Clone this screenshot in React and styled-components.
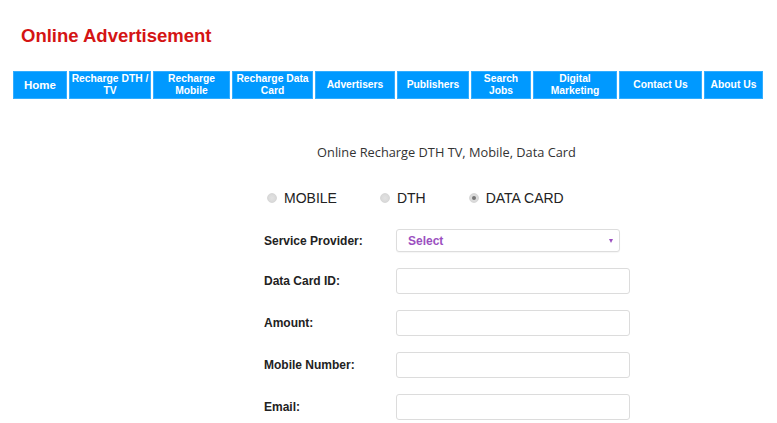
import React, { useState } from "react";
import styled, { createGlobalStyle } from "styled-components";

const GlobalStyle = createGlobalStyle`
  body {
    margin: 0;
    background: #fff;
    font-family: "Liberation Sans", Arial, sans-serif;
  }
`;

const Page = styled.div`
  width: 777px;
  padding-top: 25px;
`;

const Title = styled.h1`
  margin: 0 0 0 21px;
  font-size: 18.5px;
  line-height: 21px;
  font-weight: bold;
  color: #d41414;
`;

const Nav = styled.nav`
  display: flex;
  gap: 2px;
  margin: 25px 0 0 13px;
  height: 28px;
`;

const NavItem = styled.a`
  display: flex;
  align-items: center;
  justify-content: center;
  box-sizing: border-box;
  width: ${(p) => p.$w}px;
  padding: 0 ${(p) => p.$pad || 1}px;
  background: #0099ff;
  color: #fff;
  font-weight: bold;
  font-size: ${(p) => (p.$big ? 11.5 : 10.3)}px;
  line-height: 12px;
  text-align: center;
  text-decoration: none;
  box-shadow: inset 0 0 0 1px #33adff;
`;

const Main = styled.div`
  margin-left: 263px;
  width: 367px;
`;

const Subtitle = styled.p`
  margin: 44px 0 0;
  font-family: "Open Sans", sans-serif;
  font-size: 12.8px;
  line-height: 18px;
  color: #333;
  text-align: center;
`;

const RadioRow = styled.div`
  display: flex;
  gap: 43px;
  margin: 27px 0 0 4px;
  height: 20px;
`;

const RadioLabel = styled.label`
  display: flex;
  align-items: center;
  gap: 7px;
  font-size: 14px;
  color: #222;
`;

const Radio = styled.input`
  appearance: none;
  margin: 0;
  width: 10px;
  height: 10px;
  border-radius: 50%;
  background: radial-gradient(circle, #e2e2e2 0%, #d6d6d6 100%);
  border: 1px solid #d8d8d8;
  box-sizing: border-box;
  display: grid;
  place-items: center;

  &:checked::after {
    content: "";
    width: 4px;
    height: 4px;
    border-radius: 50%;
    background: #777;
  }
`;

const Form = styled.form`
  display: flex;
  flex-direction: column;
  gap: 16px;
  margin-top: 21px;
`;

const Row = styled.div`
  display: flex;
  align-items: center;
`;

const FieldLabel = styled.label`
  width: 132px;
  margin-left: 1px;
  font-size: 12px;
  font-weight: bold;
  color: #222;
`;

const SelectWrap = styled.div`
  position: relative;
  width: 224px;
  height: 23px;
`;

const Select = styled.select`
  appearance: none;
  width: 100%;
  height: 100%;
  box-sizing: border-box;
  border: 1px solid #ddd;
  border-radius: 3px;
  background: #fff;
  padding: 0 0 0 11px;
  font-family: "Liberation Sans", Arial, sans-serif;
  font-size: 12px;
  font-weight: bold;
  color: #9b4fc0;
  box-shadow: 0 1px 1px rgba(0, 0, 0, 0.04);
`;

const Arrow = styled.span`
  position: absolute;
  right: 7px;
  top: 10px;
  width: 0;
  height: 0;
  border-left: 2.5px solid transparent;
  border-right: 2.5px solid transparent;
  border-top: 4px solid #9b4fc0;
  pointer-events: none;
`;

const Input = styled.input`
  width: 234px;
  height: 26px;
  box-sizing: border-box;
  border: 1px solid #dcdcdc;
  border-radius: 3px;
  padding: 0 8px;
  background: #fff;
`;

const menu = [
  { label: "Home", w: 54, big: true },
  { label: "Recharge DTH / TV", w: 82 },
  { label: "Recharge Mobile", w: 77, pad: 6 },
  { label: "Recharge Data Card", w: 81 },
  { label: "Advertisers", w: 80 },
  { label: "Publishers", w: 72 },
  { label: "Search Jobs", w: 60, pad: 6 },
  { label: "Digital Marketing", w: 84, pad: 8 },
  { label: "Contact Us", w: 83 },
  { label: "About Us", w: 59 },
];

const fields = ["Data Card ID:", "Amount:", "Mobile Number:", "Email:"];

const App = () => {
  const [type, setType] = useState("datacard");

  return (
    <Page>
      <GlobalStyle />
      <Title>Online Advertisement</Title>
      <Nav>
        {menu.map((m) => (
          <NavItem key={m.label} href="#" $w={m.w} $big={m.big} $pad={m.pad}>
            {m.label}
          </NavItem>
        ))}
      </Nav>
      <Main>
        <Subtitle>Online Recharge DTH TV, Mobile, Data Card</Subtitle>
        <RadioRow>
          {[
            ["mobile", "MOBILE"],
            ["dth", "DTH"],
            ["datacard", "DATA CARD"],
          ].map(([value, text]) => (
            <RadioLabel key={value}>
              <Radio
                type="radio"
                name="type"
                value={value}
                checked={type === value}
                onChange={() => setType(value)}
              />
              {text}
            </RadioLabel>
          ))}
        </RadioRow>
        <Form onSubmit={(e) => e.preventDefault()}>
          <Row>
            <FieldLabel>Service Provider:</FieldLabel>
            <SelectWrap>
              <Select defaultValue="">
                <option value="">Select</option>
              </Select>
              <Arrow />
            </SelectWrap>
          </Row>
          {fields.map((f) => (
            <Row key={f}>
              <FieldLabel>{f}</FieldLabel>
              <Input type="text" />
            </Row>
          ))}
        </Form>
      </Main>
    </Page>
  );
};

export default App;
